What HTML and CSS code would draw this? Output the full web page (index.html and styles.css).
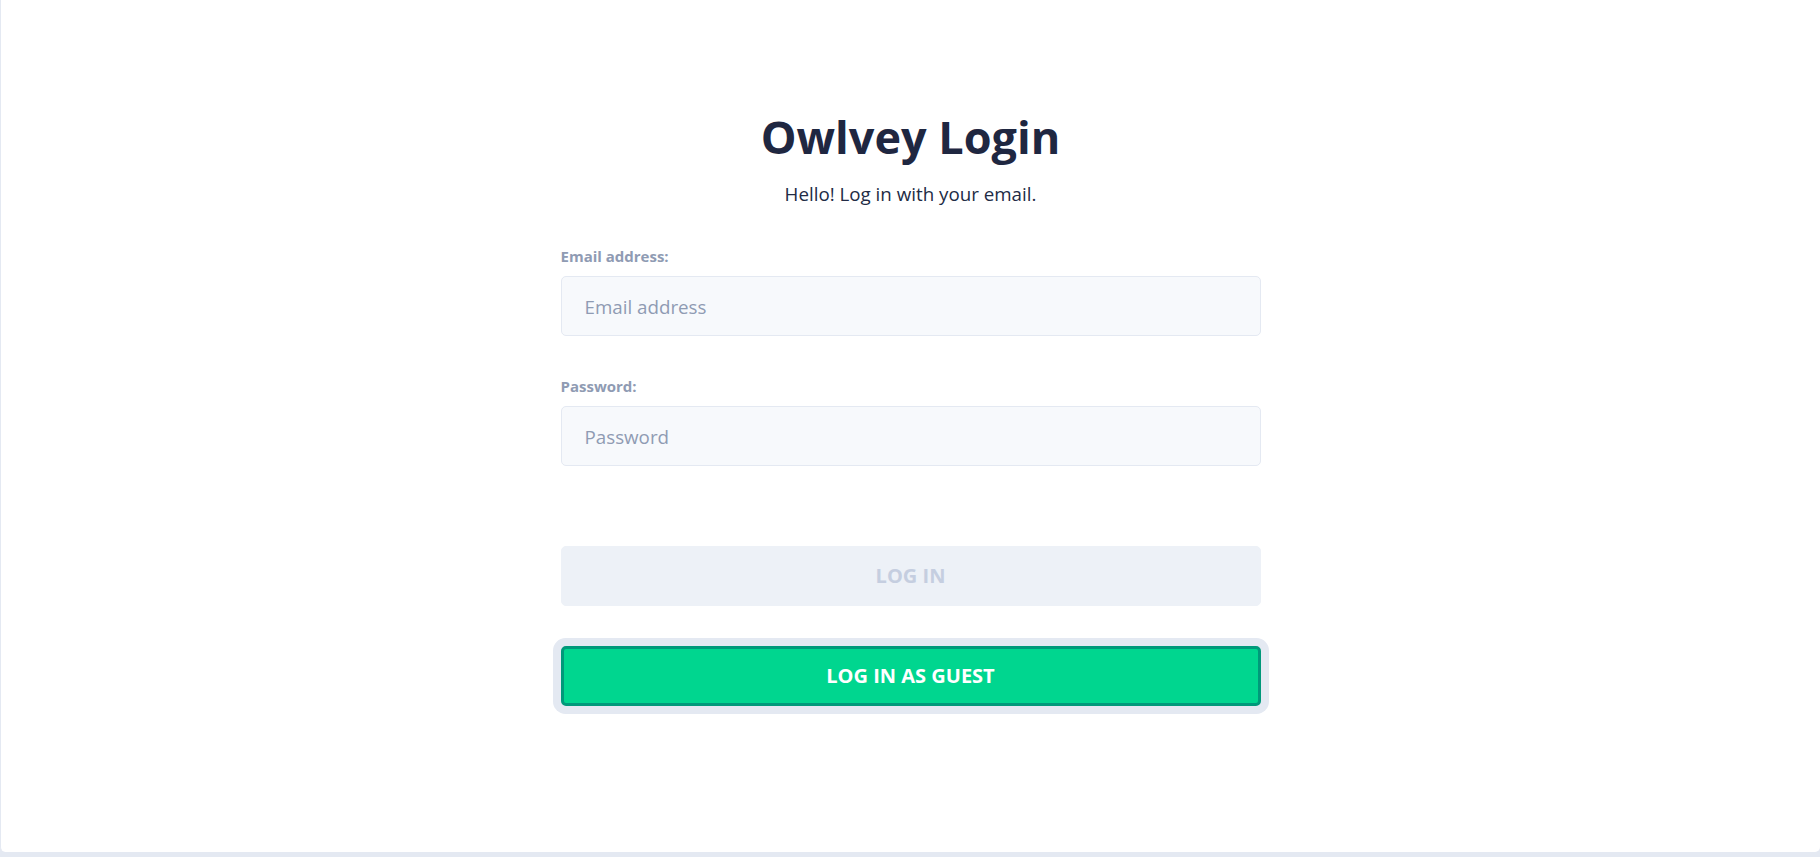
FILE: index.html
```html
<!DOCTYPE html>
<html lang="en">
<head>
<meta charset="utf-8">
<title>Owlvey Login</title>
<link rel="stylesheet" href="styles.css">
</head>
<body>
<div class="card">
  <div class="auth-block">
    <h1 class="title">Owlvey Login</h1>
    <p class="sub-title">Hello! Log in with your email.</p>
    <form class="form">
      <div class="group">
        <label class="label" for="email">Email address:</label>
        <input class="input" id="email" type="email" placeholder="Email address">
      </div>
      <div class="group group-last">
        <label class="label" for="password">Password:</label>
        <input class="input" id="password" type="password" placeholder="Password">
      </div>
      <button type="button" class="btn btn-disabled" disabled>Log In</button>
      <button type="button" class="btn btn-guest">Log In as Guest</button>
    </form>
  </div>
</div>
</body>
</html>
```

FILE: styles.css
```css
* { box-sizing: border-box; }
html, body { margin: 0; padding: 0; }
body {
  background: #e4e9f2;
  font-family: "Open Sans", "Noto Sans", sans-serif;
  color: #222b45;
  height: 857px;
  overflow: hidden;
}
.card {
  background: #ffffff;
  height: 852px;
  border-left: 1px solid #e4e9f2;
  border-radius: 0 0 5px 5px;
  padding-top: 107px;
}
.auth-block {
  width: 700px;
  margin: 0 auto;
}
.title {
  margin: 0 0 14px;
  font-size: 45px;
  line-height: 60px;
  font-weight: 700;
  text-align: center;
  color: #1f2741;
}
.sub-title {
  margin: 0 0 40px;
  font-size: 18.75px;
  line-height: 25px;
  text-align: center;
  color: #222b45;
}
.group { margin-bottom: 40px; }
.group-last { margin-bottom: 80px; }
.label {
  display: block;
  font-size: 15px;
  line-height: 20px;
  font-weight: 700;
  color: #8f9bb3;
  margin-bottom: 10px;
}
.input {
  display: block;
  width: 100%;
  height: 60px;
  padding: 0 23px;
  background: #f7f9fc;
  border: 1px solid #e4e9f2;
  border-radius: 5px;
  font-family: inherit;
  font-size: 18.75px;
  color: #222b45;
  outline: none;
}
.input::placeholder { color: #8f9bb3; opacity: 1; }
.btn {
  display: block;
  width: 100%;
  height: 60px;
  border-radius: 5px;
  font-family: inherit;
  font-size: 20px;
  font-weight: 700;
  text-transform: uppercase;
  line-height: 30px;
}
.btn-disabled {
  background: #edf1f7;
  border: 1px solid #edf1f7;
  color: #c5cee0;
  margin-bottom: 40px;
}
.btn-guest {
  background: #00d68f;
  border: 3px solid #00997a;
  color: #ffffff;
  box-shadow: 0 0 0 8px #e4e9f2;
}
```
